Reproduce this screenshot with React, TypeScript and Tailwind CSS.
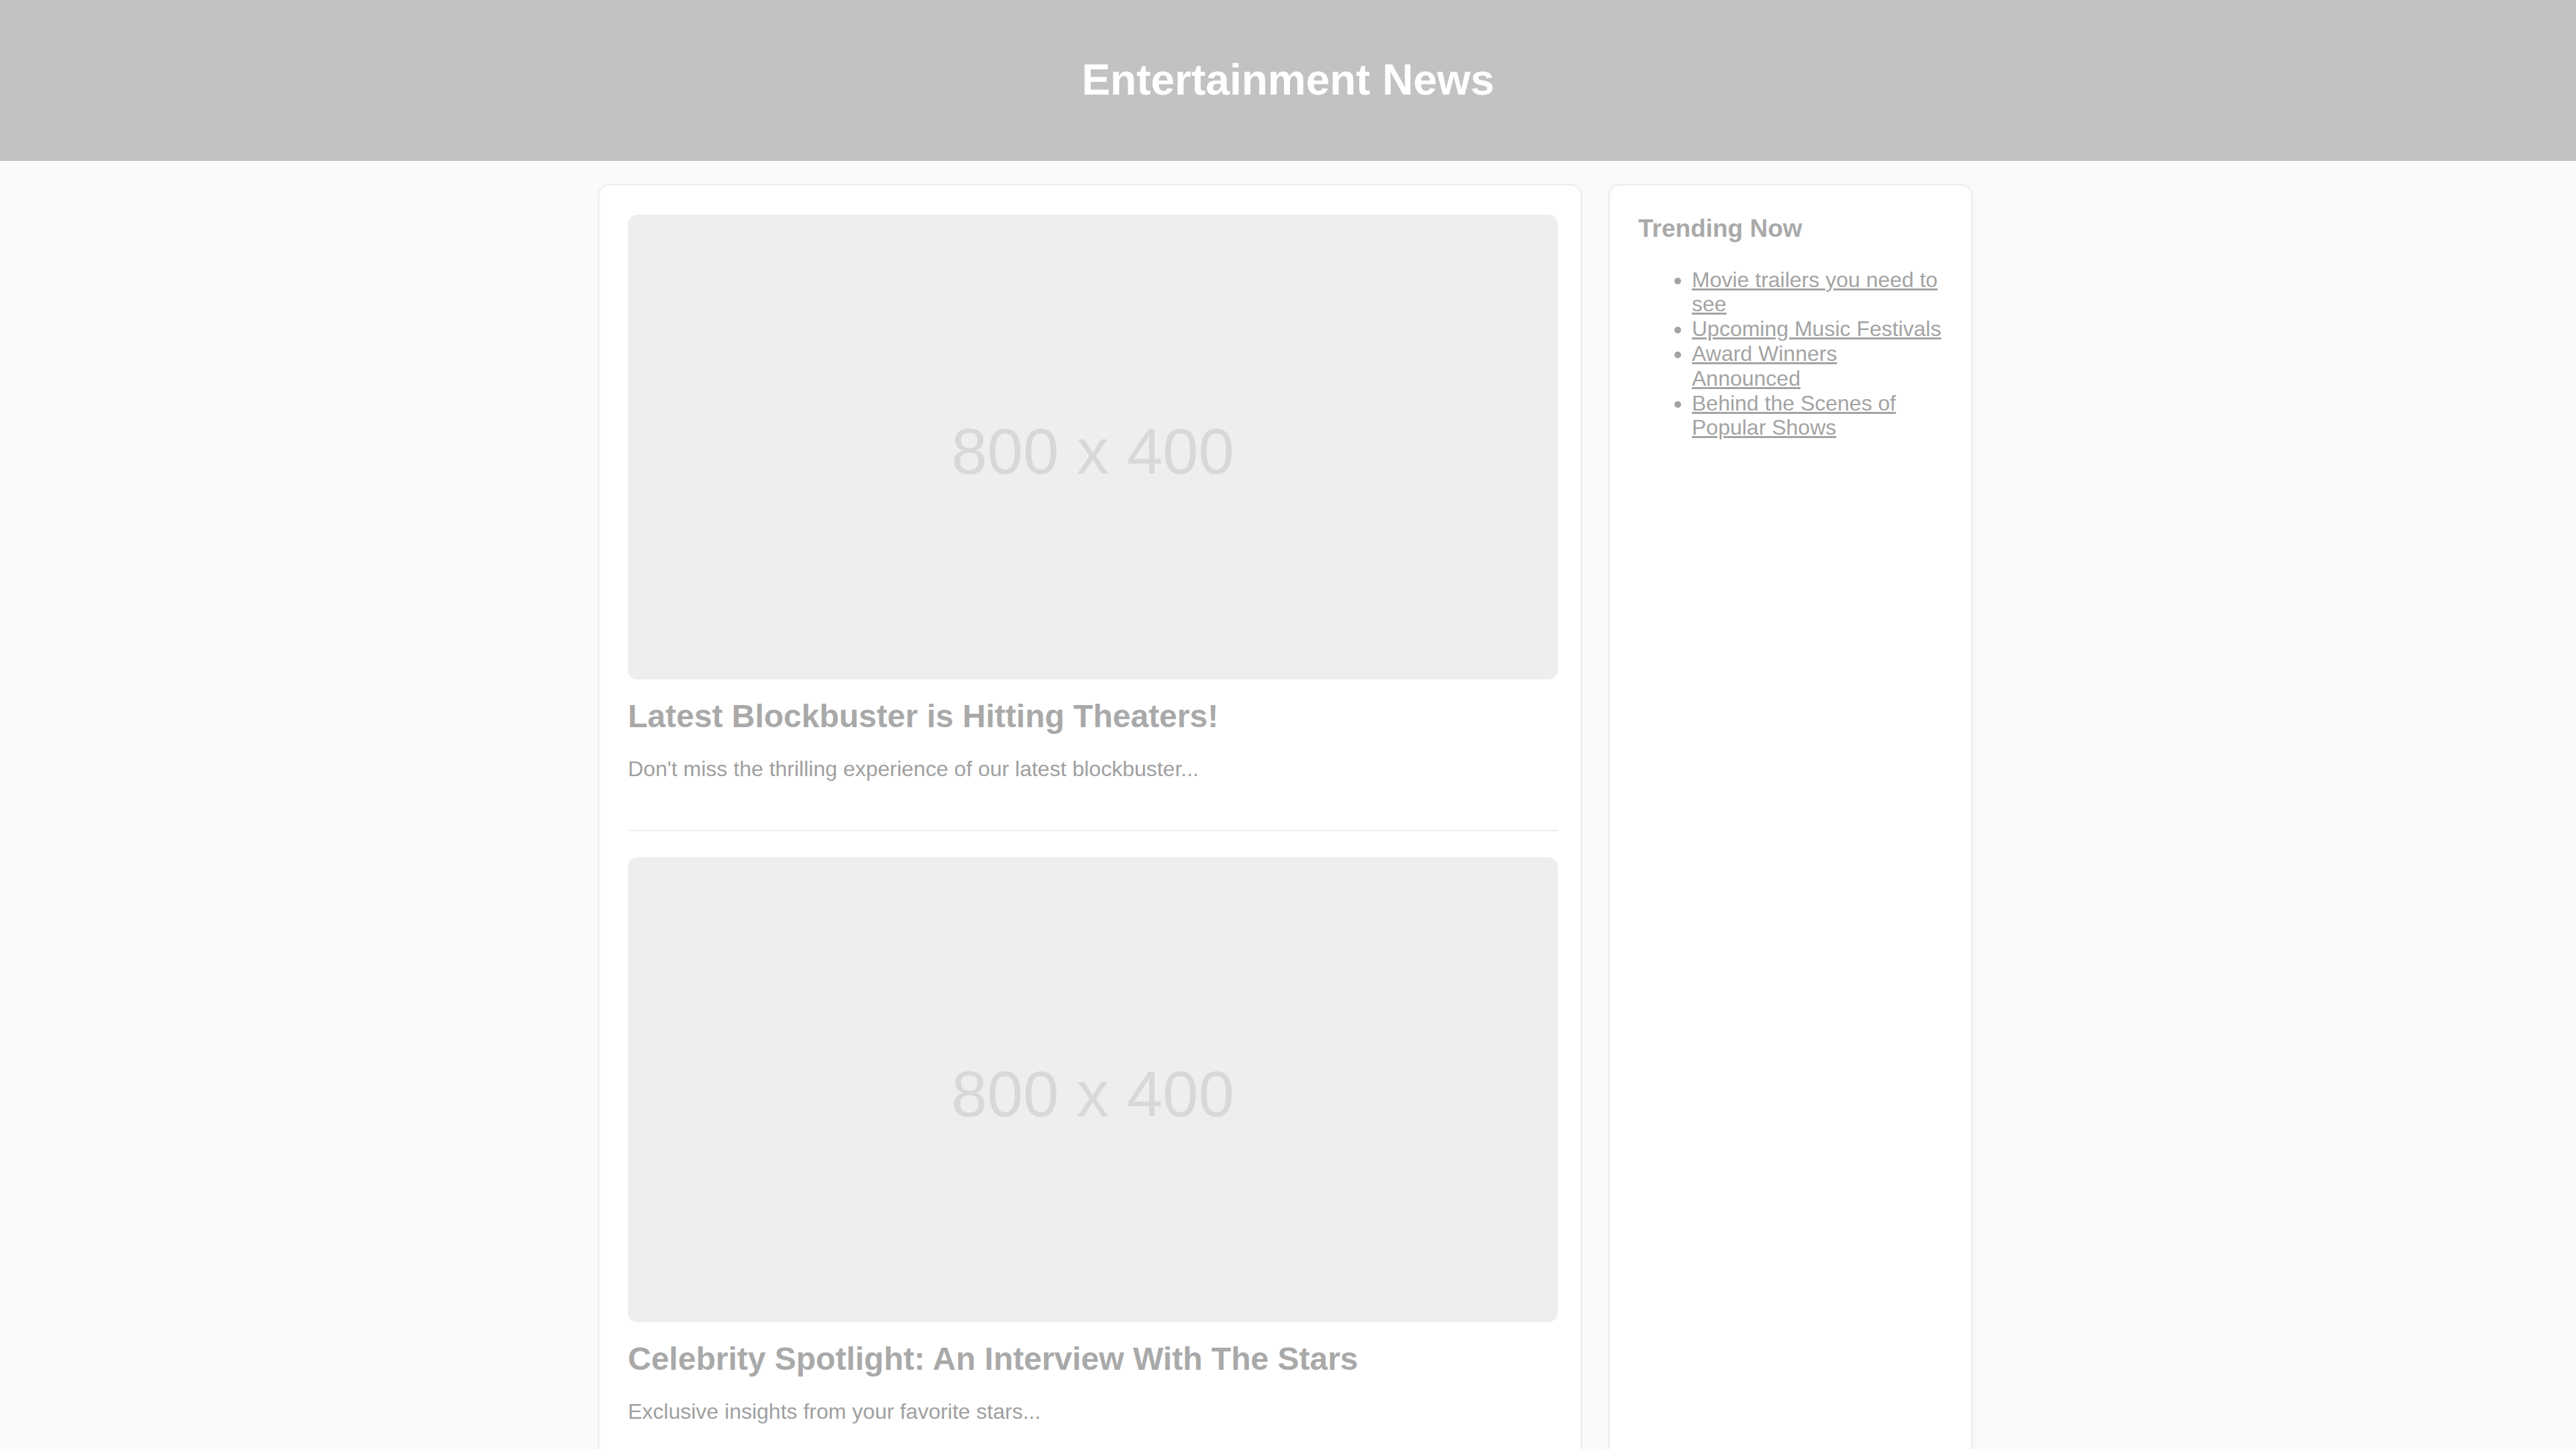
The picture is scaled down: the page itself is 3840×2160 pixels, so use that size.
const articles = [
  {
    title: 'Latest Blockbuster is Hitting Theaters!',
    summary: "Don't miss the thrilling experience of our latest blockbuster...",
  },
  {
    title: 'Celebrity Spotlight: An Interview With The Stars',
    summary: 'Exclusive insights from your favorite stars...',
  },
]

const trending = [
  'Movie trailers you need to see',
  'Upcoming Music Festivals',
  'Award Winners Announced',
  'Behind the Scenes of Popular Shows',
]

function Placeholder() {
  return (
    <div className="w-full aspect-[2/1] bg-[#eeeeee] rounded-[14px] flex items-center justify-center pt-[14px]">
      <span className="text-[96px] leading-[1.15] text-[#d8d8d8]">800 x 400</span>
    </div>
  )
}

export default function App() {
  return (
    <div className="min-h-screen bg-[#fafafa] font-['Liberation_Sans',Arial,sans-serif]">
      <header className="h-[240px] bg-[#c2c2c2] flex items-center justify-center">
        <h1 className="text-[64px] leading-[1.15] font-bold text-white">Entertainment News</h1>
      </header>

      <div className="pr-[8px]">
        <main className="mx-auto w-[2048px] mt-[35px] flex items-stretch gap-[40px]">
          <section className="w-[1466px] shrink-0 bg-white border border-[#e2e2e2] rounded-2xl shadow-[inset_0_0_6px_rgba(0,0,0,0.04),0_0_10px_rgba(0,0,0,0.03)] pt-[44px] pl-[43px] pr-[35px] pb-[40px]">
            {articles.map((a, i) => (
              <article key={i} className={`border-b-2 border-[#eeeeee] pb-[71px] ${i > 0 ? 'mt-[39px]' : ''}`}>
                <Placeholder />
                <h2 className="mt-[27px] text-[48px] leading-[56px] font-bold text-[#a9a9a9]">{a.title}</h2>
                <p className="mt-[30px] text-[32px] leading-[40px] text-[#9f9f9f]">{a.summary}</p>
              </article>
            ))}
          </section>

          <aside className="w-[542px] shrink-0 bg-white border border-[#e2e2e2] rounded-2xl shadow-[inset_0_0_6px_rgba(0,0,0,0.04),0_0_10px_rgba(0,0,0,0.03)] pt-[44px] px-[43px]">
            <h3 className="text-[37px] leading-[1.15] font-bold text-[#a9a9a9]">Trending Now</h3>
            <ul className="mt-[36px] list-disc pl-[80px] text-[32px] leading-[1.15] text-[#a3a3a3]">
              {trending.map((t) => (
                <li key={t}>
                  <a href="#" className="underline">{t}</a>
                </li>
              ))}
            </ul>
          </aside>
        </main>
      </div>
    </div>
  )
}
